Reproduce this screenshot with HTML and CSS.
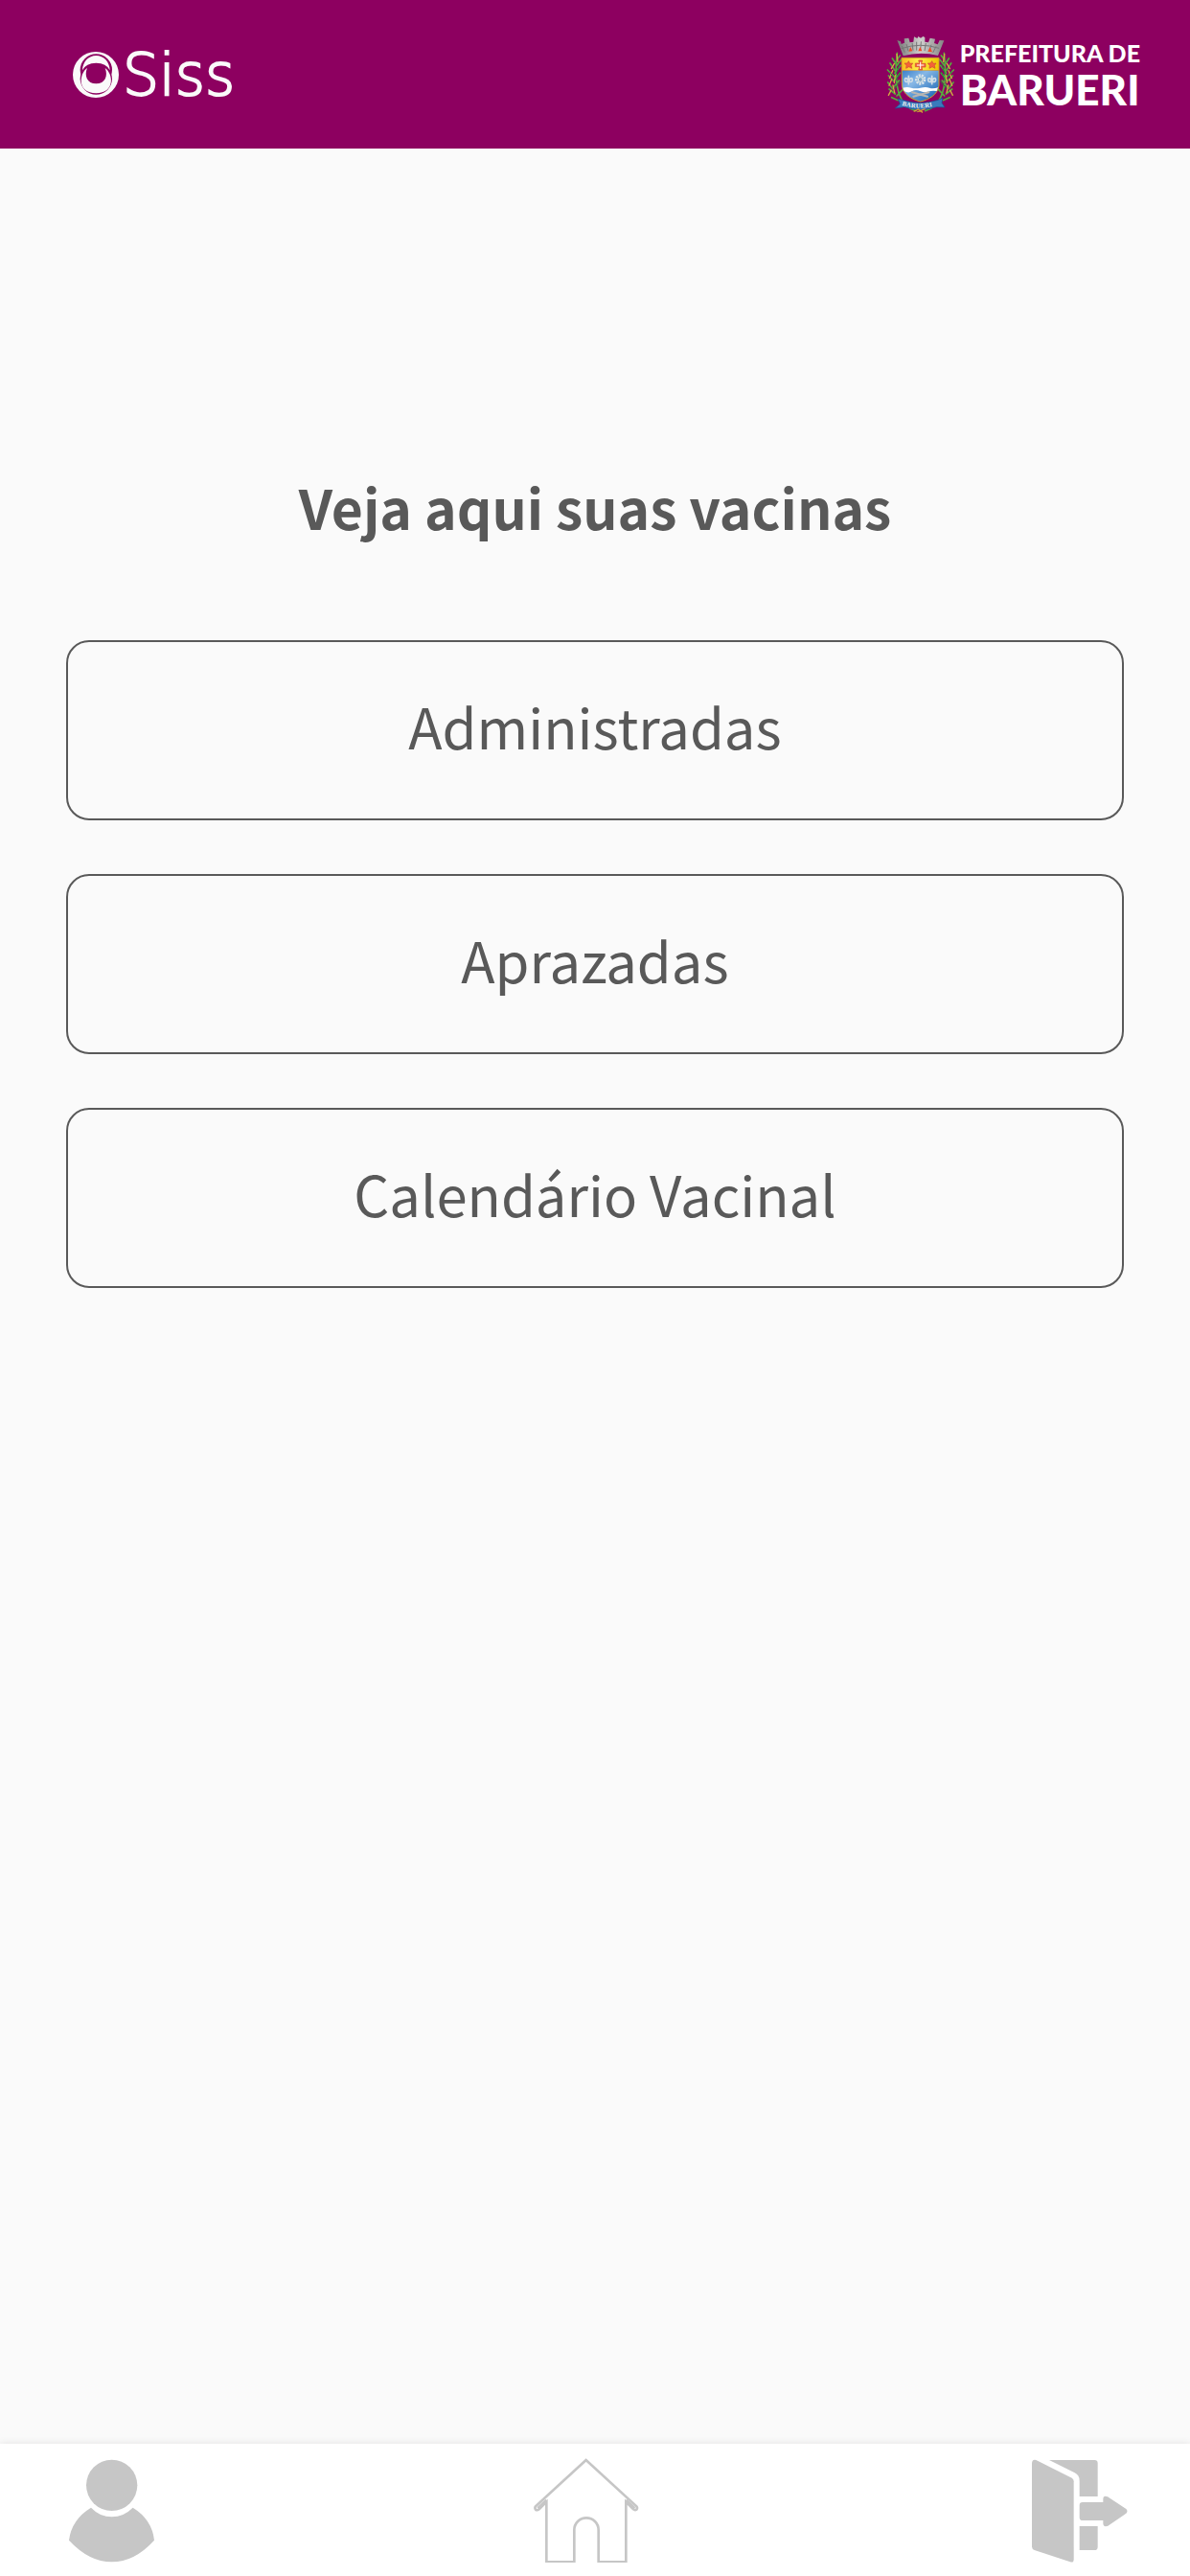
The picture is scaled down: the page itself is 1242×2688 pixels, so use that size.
FILE: index.html
```html
<!DOCTYPE html>
<html lang="pt-BR">
<head>
<meta charset="utf-8">
<meta name="viewport" content="width=device-width, initial-scale=1">
<title>Siss - Vacinas</title>
<link rel="stylesheet" href="styles.css">
</head>
<body>
<header class="topbar">
  <div class="brand">
    <svg class="brand-mark" viewBox="77 99 144 144" aria-hidden="true">
      <circle cx="149" cy="171" r="72" fill="#fafafa"/>
      <g fill="#8d0060">
        <circle cx="150" cy="156" r="50"/>
        <ellipse cx="150" cy="184" rx="50" ry="49"/>
      </g>
      <g fill="#fafafa">
        <path d="M107 157C108 130 126 111 150 111S192 130 193 157Q182 134 150 134T107 157Z"/>
        <path d="M122 150C96 168 90 228 150 229C210 228 204 168 178 150C188 174 178 199 150 199S112 174 122 150Z"/>
      </g>
    </svg>
    <span class="brand-name">Siss</span>
  </div>
  <div class="city">
    <svg class="crest" viewBox="60 56 216 246" aria-hidden="true">
      <defs>
        <linearGradient id="stone" x2="1"><stop stop-color="#777"/><stop offset=".5" stop-color="#d0cfcd"/><stop offset="1" stop-color="#858585"/></linearGradient>
        <linearGradient id="gold" x2="1"><stop stop-color="#f8b91d"/><stop offset=".45" stop-color="#fff04a"/><stop offset="1" stop-color="#eec400"/></linearGradient>
        <linearGradient id="sky" x2="1" y2="1"><stop stop-color="#3a7fca"/><stop offset=".35" stop-color="#86b7e6"/><stop offset="1" stop-color="#0758ac"/></linearGradient>
        <g id="stalk" fill="none" stroke-linecap="round">
          <path stroke="#55ad3d" stroke-width="5" d="M156 292C112 280 82 235 97 111M83 223L68 203M87 200L70 182M88 185L67 164M90 166L75 143M94 146L82 128M86 217L103 197M88 196L106 174M90 174L108 150M94 153L110 132M96 132L106 119M91 239L72 224M100 259L80 250M96 245L114 226"/>
          <path stroke="#d4aa43" stroke-width="4" d="M96 114L99 138M88 144L79 160M83 166L73 190M80 193L72 213M78 228L70 243M84 212L89 235M91 181L88 204"/>
          <path stroke="#25843b" stroke-width="3" d="M105 148L94 175M106 171L93 197M108 199L90 221M74 170L87 188"/>
        </g>
      </defs>
      <use href="#stalk"/>
      <use href="#stalk" transform="matrix(-1 0 0 1 341 0)"/>
      <path d="M97 71L108 75L110 83L120 79L119 66L133 64L137 78L148 76L150 60L160 65L163 59L171 64L178 59L184 62L184 76L195 78L200 64L216 67L213 80L224 84L230 71L244 72L225 119Q170 105 116 120Z" fill="url(#stone)"/>
      <path d="M112 89L121 109M126 83L132 105M144 79L147 103M158 76V103M172 75L170 103M187 80L183 104M204 85L197 107M219 90L209 110M110 97Q170 77 228 96" fill="none" stroke="#777" stroke-width="3"/>
      <path d="M133 106L139 92L145 105ZM163 105L169 91L175 105ZM193 106L200 92L207 108Z" fill="#f14c27"/>
      <path d="M111 126H228V166H111Z" fill="url(#gold)"/>
      <path d="M111 166H228V213C224 241 198 256 170 263C142 256 116 241 112 213Z" fill="url(#sky)"/>
      <path d="M111 126H228V213C224 241 198 256 170 263C142 256 116 241 112 213Z" fill="none" stroke="#caa22c" stroke-width="3"/>
      <g fill="#f66336" stroke="#cc4935" stroke-width="2">
        <path id="flower" d="M133 136L137 144L146 143L141 150L143 159L134 154L125 159L126 150L120 143L129 143Z"/>
        <use href="#flower" x="73"/>
        <path d="M164 134H176L173 144H186V155H174L176 164H164L167 154H154V143H167Z"/>
      </g>
      <path d="M170 139V161M159 149H181" stroke="#fff" stroke-width="3"/>
      <circle cx="170" cy="194" r="13" fill="#86b7d8" stroke="#dbe4e9" stroke-width="8" stroke-dasharray="6 3"/>
      <circle cx="170" cy="194" r="7" fill="#79a8c8" stroke="#e5e6e5" stroke-width="3"/>
      <g id="lily" fill="none" stroke="#cfdde6" stroke-width="5" stroke-linecap="round">
        <path d="M133 183V208M122 199C118 187 130 187 131 199M144 199C148 187 136 187 135 199M124 201H142"/>
      </g>
      <use href="#lily" x="73"/>
      <path d="M115 220Q129 216 141 220T170 220T198 220T225 219L221 230Q204 228 194 232T169 230T143 231T119 230Z" fill="#fff"/>
      <path d="M144 234L192 247M196 234L148 247" stroke="#b9b6b2" stroke-width="6" stroke-linecap="round"/>
      <path d="M99 254L114 258Q170 276 226 258L240 251L237 267L246 281L221 280Q170 296 119 280L91 284L106 270Z" fill="#397bbc" stroke="#164f92" stroke-width="2"/>
      <path id="ribbon" d="M114 266Q170 282 226 264" fill="none"/>
      <text class="crest-name" dy="9"><textPath href="#ribbon">BARUERI</textPath></text>
      <path d="M149 294L163 287L177 297M160 295L185 286" stroke="#d49b37" stroke-width="4" fill="none"/>
    </svg>
    <div class="city-name">
      <span class="city-kind">PREFEITURA DE</span>
      <span class="city-title">BARUERI</span>
    </div>
  </div>
</header>

<main class="content">
  <h1 class="heading">Veja aqui suas vacinas</h1>
  <div class="options">
    <button class="option" type="button">Administradas</button>
    <button class="option" type="button">Aprazadas</button>
    <button class="option" type="button">Calendário Vacinal</button>
  </div>
</main>

<nav class="tabbar" aria-label="Principal">
  <a class="tab" href="#perfil" aria-label="Perfil">
    <svg class="icon icon-user" viewBox="75 102 288 330">
      <circle cx="230" cy="190" r="80"/>
      <path d="M165 260Q193 289 230 289T296 260Q356 297 363 362Q301 430 230 430T96 362Q104 297 165 260Z"/>
    </svg>
  </a>
  <a class="tab" href="#inicio" aria-label="Início">
    <svg class="icon icon-home" viewBox="81 102 330 330">
      <path d="M245 111L87 256Q83 262 88 267Q93 269 98 265L121 242V430H208V330A38 38 0 0 1 284 330V430H370V242L393 265Q398 269 403 266Q407 261 403 256Z"/>
      <path d="M94 262L121 236M397 262L370 236"/>
    </svg>
  </a>
  <a class="tab" href="#sair" aria-label="Sair">
    <svg class="icon icon-exit" viewBox="39 102 342 330">
      <path d="M81 122Q81 108 94 111L206 167Q212 170 212 178V422Q212 433 201 430L89 393Q81 390 81 382Z"/>
      <path d="M135 111H277Q287 111 287 121V225H230V176Q230 158 215 151ZM230 318H287V383Q287 393 277 393H230Z"/>
      <path d="M240 243H304V234Q304 220 318 226L376 264Q383 271 376 278L319 317Q304 322 304 309V300H240Q230 300 230 290V253Q230 243 240 243Z"/>
    </svg>
  </a>
</nav>
</body>
</html>
```
FILE: styles.css
```css
* {
  box-sizing: border-box;
}

body {
  margin: 0;
  min-height: 100vh;
  display: flex;
  flex-direction: column;
  background: #fafafa;
  color: #595959;
  font-family: "Noto Sans CJK JP", "Noto Sans", sans-serif;
}

.topbar {
  display: flex;
  justify-content: space-between;
  align-items: center;
  height: 155px;
  padding: 0 52px 0 76px;
  background: #8d0060;
  color: #fff;
}

.brand {
  display: flex;
  align-items: center;
  gap: 4px;
}

.brand-mark {
  width: 48px;
  height: 48px;
}

.brand-name {
  font-family: "DejaVu Sans", sans-serif;
  font-size: 60px;
  font-weight: 200;
  line-height: 64px;
  color: #fafafa;
  -webkit-text-stroke: 2px #fafafa;
  stroke-linejoin: round;
}

.city {
  display: flex;
  align-items: center;
  gap: 6px;
}

.crest {
  width: 72px;
  height: 82px;
}

.crest-name {
  font: bold 20px "Liberation Serif", serif;
  fill: #f2f2f2;
}

.city-name {
  display: flex;
  flex-direction: column;
  font-family: Lato, sans-serif;
  font-weight: 900;
}

.city-kind {
  font-size: 25px;
  line-height: 30px;
}

.city-title {
  font-size: 44px;
  line-height: 46px;
}

.content {
  flex: 1;
  padding: 333px 69px 56px;
}

.heading {
  margin: 0 0 100px;
  font-size: 57px;
  font-weight: 700;
  line-height: 80px;
  text-align: center;
}

.options {
  display: flex;
  flex-direction: column;
  gap: 56px;
}

.option {
  height: 188px;
  padding: 0 24px 10px;
  border: 2px solid #595959;
  border-radius: 24px;
  background: transparent;
  color: inherit;
  font-family: inherit;
  font-size: 58px;
  line-height: 80px;
}

.tabbar {
  display: flex;
  justify-content: space-between;
  align-items: center;
  height: 138px;
  padding: 0 65px;
  background: #fff;
  box-shadow: 0 0 8px rgba(0, 0, 0, 0.1);
}

.tab {
  display: flex;
}

.icon {
  height: 110px;
  fill: #c6c6c6;
}

.icon-user {
  width: 96px;
}

.icon-home {
  width: 110px;
  fill: none;
  stroke: #c6c6c6;
  stroke-width: 8;
}

.icon-exit {
  width: 114px;
}
```
